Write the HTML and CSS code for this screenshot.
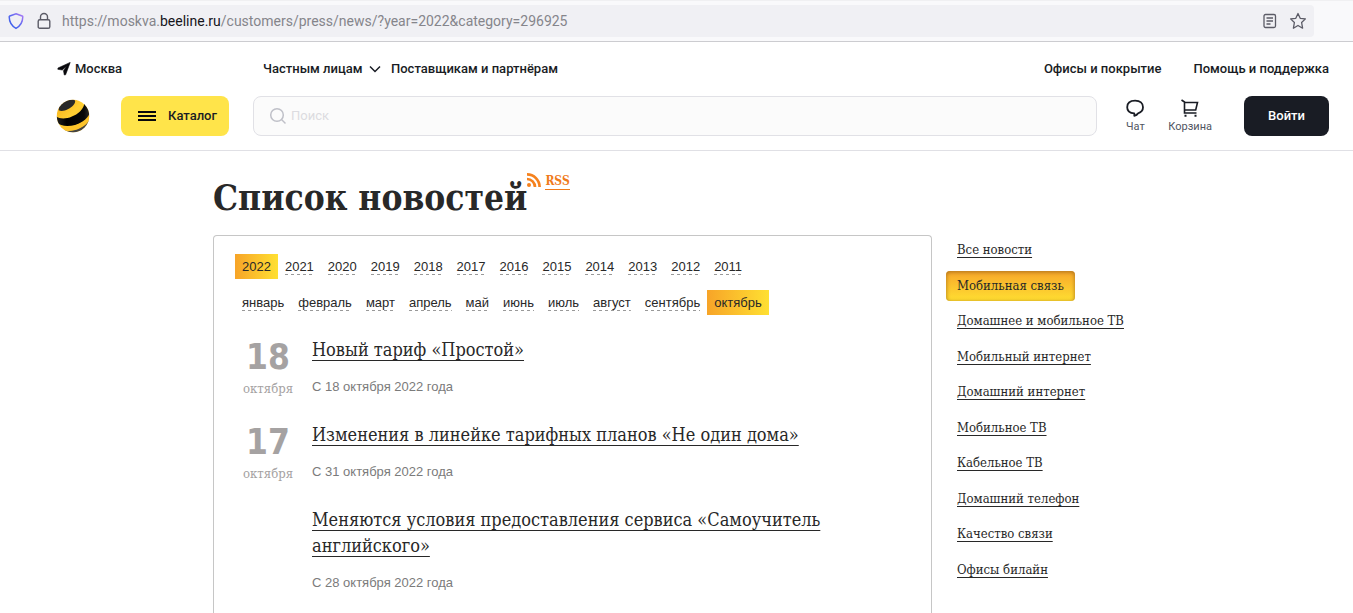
FILE: index.html
```html
<!DOCTYPE html>
<html lang="ru">
<head>
<meta charset="utf-8">
<title>Список новостей</title>
<link rel="stylesheet" href="styles.css">
</head>
<body>
<div class="toolbar">
  <div class="address">
    <svg class="shield" width="16" height="18" viewBox="0 0 16 18" fill="none"><defs><linearGradient id="sh" x1="0" y1="1" x2="1" y2="0"><stop offset="0" stop-color="#2f5be8"/><stop offset=".5" stop-color="#5a68f0"/><stop offset="1" stop-color="#b07cf5"/></linearGradient></defs><path d="M8 1.700 14.200 4c.4.200.6.400.6.800-.1 5.600-2.300 9.200-6.800 11.500C3.500 14 1.300 10.400 1.200 4.800c0-.4.200-.6.600-.8z" stroke="url(#sh)" stroke-width="1.500"/></svg>
    <svg class="lock" width="14" height="18" viewBox="0 0 14 18" fill="none" stroke="#5b5b66" stroke-width="1.400"><rect x="1.200" y="7.700" width="11.600" height="8.600" rx="1.600"/><path d="M3.500 7.500V5a3.500 3.500 0 0 1 7 0v2.500"/></svg>
    <span class="url">https://moskva.<b>beeline.ru</b>/customers/press/news/?year=2022&amp;category=296925</span>
    <button class="tool" aria-label="Режим чтения"><svg width="14" height="16" viewBox="0 0 14 16" fill="none" stroke="#5b5b66" stroke-width="1.300"><rect x="1" y="1.500" width="11.500" height="13" rx="1.500"/><path d="M3.500 5h6.500M3.500 8h6.500M3.500 11h4"/></svg></button>
    <button class="tool" aria-label="Добавить в закладки"><svg width="18" height="18" viewBox="0 0 18 18" fill="none" stroke="#5b5b66" stroke-width="1.300" stroke-linejoin="round"><path d="M9 1.500l2.200 4.800 5.200.6-3.800 3.600 1 5.700L9 13.500l-4.600 2.700 1-5.700L1.600 6.900l5.200-.6z"/></svg></button>
  </div>
</div>

<header class="header">
  <nav class="topnav">
    <a class="city" href="#"><svg width="15" height="14" viewBox="0 0 15 14"><path d="M14.200.4 2 6l-.2 1.300 4.500.7L10.500 4.200 7.500 8.800l.8 4.200 1.300-.2z" fill="#08080c" stroke="#08080c" stroke-width=".6" stroke-linejoin="round"/></svg>Москва</a>
    <a class="persons" href="#">Частным лицам<svg width="12" height="8" viewBox="0 0 12 8" fill="none" stroke="#191c24" stroke-width="1.500"><path d="M1 1.500l5 5 5-5"/></svg></a>
    <a class="partners" href="#">Поставщикам и партнёрам</a>
    <a class="offices" href="#">Офисы и покрытие</a>
    <a href="#">Помощь и поддержка</a>
  </nav>
  <div class="mainbar">
    <a class="logo" href="#" aria-label="Билайн"><svg width="34" height="34" viewBox="0 0 34 34"><defs><clipPath id="ball"><circle cx="17" cy="17" r="16.200"/></clipPath><linearGradient id="yl" x1="0" y1="0" x2="1" y2="1"><stop offset="0" stop-color="#f5a913"/><stop offset=".45" stop-color="#ffcf32"/><stop offset="1" stop-color="#f6b51d"/></linearGradient><linearGradient id="bk" x1="0" y1="0" x2="1" y2="0"><stop offset="0" stop-color="#222"/><stop offset=".3" stop-color="#000"/><stop offset=".8" stop-color="#080808"/><stop offset="1" stop-color="#333"/></linearGradient></defs><g clip-path="url(#ball)"><path d="M0 0h34v34H0z" fill="url(#yl)"/><path d="M2.800 11.300C1 5 9 0 17 .6c3 .3 2.800 3 .3 5.600-4 4-10.300 7-14.500 5.100z" fill="#292929"/><path d="M0 17.500c6 4 17 1.500 24-5 3.500-3.500 4.500-6 4-9.500L35 9c0 5-3 10-8.500 13.500C18 28 6 29 0 23z" fill="url(#bk)"/><path d="M6 31c10 2.500 22-2 28-11v15H7z" fill="#444"/><path d="M3 26.500c11 3.500 23-.5 31-10l-.5 5C27 30 15 34 6 31z" fill="#fdc42b"/></g></svg></a>
    <button class="catalog"><svg width="18" height="12" viewBox="0 0 18 12" fill="#08080c"><path d="M0 1h18v2H0zM0 5h18v2H0zM0 9h18v2H0z"/></svg>Каталог</button>
    <label class="search"><svg width="18" height="18" viewBox="0 0 18 18" fill="none" stroke="#bfc0c8" stroke-width="1.500"><circle cx="8" cy="8" r="6.300"/><path d="M12.500 12.500l4 4"/></svg><input type="search" placeholder="Поиск" aria-label="Поиск"></label>
    <div class="shortcuts">
      <a class="shortcut" href="#"><svg width="20" height="20" viewBox="0 0 20 20" fill="none" stroke="#191c24" stroke-width="1.800" stroke-linejoin="round"><path d="M9.300 15.300v2.500c1.700-.3 3-1.100 3.800-2.500 3.200-1 4.900-3.200 4.900-6 0-4.300-2.800-6.700-7.900-6.700S2.200 5 2.200 9.200c0 3.600 2.600 6 7.100 6.100z"/></svg>Чат</a>
      <a class="shortcut" href="#"><svg width="20" height="20" viewBox="0 0 20 20" fill="none" stroke="#191c24" stroke-width="1.600"><path d="M1.500 2 4.500 4v11h12M4.500 4.500H17.500l-1.800 7.500H4.500"/><path d="M4.500 17.700h2M14.500 17.700h2" stroke-width="2"/></svg>Корзина</a>
    </div>
    <button class="login">Войти</button>
  </div>
</header>

<main class="page">
  <div class="heading">
    <h1>Список новостей</h1>
    <a class="rss" href="#"><svg width="14" height="16" viewBox="0 0 14 16" fill="none" stroke="#f5821f" stroke-width="2.700"><circle cx="2" cy="13" r="2" fill="#f5821f" stroke="none"/><path d="M0 7a8 8 0 0 1 8 8M0 2.400A12.600 12.600 0 0 1 12.600 15"/></svg><span>RSS</span></a>
  </div>
  <div class="columns">
    <section class="news">
      <nav class="filter years">
        <a class="active" href="#"><span>2022</span></a><a href="#"><span>2021</span></a><a href="#"><span>2020</span></a><a href="#"><span>2019</span></a><a href="#"><span>2018</span></a><a href="#"><span>2017</span></a><a href="#"><span>2016</span></a><a href="#"><span>2015</span></a><a href="#"><span>2014</span></a><a href="#"><span>2013</span></a><a href="#"><span>2012</span></a><a href="#"><span>2011</span></a>
      </nav>
      <nav class="filter">
        <a href="#"><span>январь</span></a><a href="#"><span>февраль</span></a><a href="#"><span>март</span></a><a href="#"><span>апрель</span></a><a href="#"><span>май</span></a><a href="#"><span>июнь</span></a><a href="#"><span>июль</span></a><a href="#"><span>август</span></a><a href="#"><span>сентябрь</span></a><a class="active" href="#"><span>октябрь</span></a>
      </nav>
      <div class="items">
        <article class="item">
          <div class="date"><strong>18</strong><span>октября</span></div>
          <div class="body"><h2><a href="#">Новый тариф «Простой»</a></h2><p>С 18 октября 2022 года</p></div>
        </article>
        <article class="item">
          <div class="date"><strong>17</strong><span>октября</span></div>
          <div class="body"><h2><a href="#">Изменения в линейке тарифных планов «Не один дома»</a></h2><p>С 31 октября 2022 года</p></div>
        </article>
        <article class="item">
          <div class="date"></div>
          <div class="body"><h2><a href="#">Меняются условия предоставления сервиса «Самоучитель английского»</a></h2><p>С 28 октября 2022 года</p></div>
        </article>
      </div>
    </section>
    <nav class="categories">
      <a href="#">Все новости</a>
      <a class="current" href="#">Мобильная связь</a>
      <a href="#">Домашнее и мобильное ТВ</a>
      <a href="#">Мобильный интернет</a>
      <a href="#">Домашний интернет</a>
      <a href="#">Мобильное ТВ</a>
      <a href="#">Кабельное ТВ</a>
      <a href="#">Домашний телефон</a>
      <a href="#">Качество связи</a>
      <a href="#">Офисы билайн</a>
    </nav>
  </div>
</main>
</body>
</html>
```
FILE: styles.css
```css
* { box-sizing: border-box; }
body {
  margin: 0;
  min-height: 100vh;
  display: flex;
  flex-direction: column;
  background: #fff;
  color: #282828;
  font: 13px/20px "Liberation Sans", Arial, sans-serif;
}
a { color: inherit; text-decoration: none; }
button { border: 0; padding: 0; font: inherit; color: inherit; background: none; cursor: pointer; }
svg { display: block; flex: none; }

/* Browser toolbar */
.toolbar {
  padding: 4px 39px 4px 0;
  background: #f9f9fb;
  border-top: 1px solid #f0f0f2;
  border-bottom: 1px solid #ccccd0;
}
.address {
  display: flex;
  align-items: center;
  height: 32px;
  padding: 0 7px 0 8px;
  background: #f0f0f4;
  border-radius: 0 4px 4px 0;
}
.lock { margin: 0 11px 0 13px; }
.url {
  flex: 1;
  color: #85858b;
  font: 14px/20px Roboto, sans-serif;
  white-space: nowrap;
}
.url b { color: #15141a; font-weight: 400; }
.tool { margin-left: 12px; }

/* Site header */
.header {
  padding: 16px 24px 14px 56px;
  border-bottom: 1px solid #e0e0e5;
  color: #191c24;
  font: 500 13px/22px Roboto, sans-serif;
}
.topnav { display: flex; align-items: center; }
.city { display: flex; align-items: center; gap: 4px; width: 207px; }
.persons { display: flex; align-items: center; gap: 6px; width: 128px; }
.partners { flex: 1; }
.offices { margin-right: 32px; }
.mainbar { display: flex; align-items: center; margin-top: 16px; }
.logo { width: 65px; }
.catalog {
  display: flex;
  align-items: center;
  padding-left: 17px;
  gap: 12px;
  width: 108px;
  height: 40px;
  background: #ffe44a;
  border-radius: 8px;
}
.search {
  flex: 1;
  display: flex;
  align-items: center;
  gap: 4px;
  height: 40px;
  margin: 0 24px;
  padding: 0 15px;
  background: #fbfbfb;
  border: 1px solid #e1e1e6;
  border-radius: 8px;
}
.search input {
  flex: 1;
  min-width: 0;
  border: 0;
  padding: 0;
  outline: 0;
  background: none;
  font: 13px/20px Roboto, sans-serif;
}
.search input::placeholder { color: #dcdce0; opacity: 1; }
.shortcuts { display: flex; gap: 19px; }
.shortcut {
  display: flex;
  flex-direction: column;
  align-items: center;
  min-width: 28px;
  color: #50545f;
  font-size: 11px;
  font-weight: 400;
  line-height: 17px;
}
.login {
  width: 85px;
  height: 40px;
  margin-left: 32px;
  background: #191c24;
  border-radius: 8px;
  color: #fff;
}

/* News page */
.page {
  flex: 1;
  display: flex;
  flex-direction: column;
  width: 100%;
  max-width: 927px;
  margin: 0 auto;
  font-family: "DejaVu Serif Condensed", "DejaVu Serif", serif;
}
.heading { display: flex; align-items: flex-start; padding: 21px 0 11px; }
h1 { margin: 0; font-size: 35px; line-height: 52px; font-weight: 700; }
.rss {
  display: flex;
  gap: 4px;
  color: #f07a1a;
  font-size: 12px;
  font-weight: 700;
  line-height: 18px;
}
.rss span { height: 18px; border-bottom: 1px solid #f07a1a; }
.columns { flex: 1; display: flex; align-items: stretch; }
.news {
  flex: 1;
  max-width: 719px;
  padding: 18px 21px 0;
  border: 1px solid #c6c6c6;
  border-bottom: 0;
  border-radius: 4px 4px 0 0;
}
.filter {
  display: flex;
  flex-wrap: wrap;
  margin-bottom: 11px;
  font: 13px/15px "Liberation Sans", Arial, sans-serif;
}
.filter a { height: 25px; padding: 5px 7px; }
.filter span {
  display: block;
  padding-bottom: 1px;
  background: repeating-linear-gradient(90deg, #999 0 3px, transparent 3px 6px) bottom / 100% 1px no-repeat;
}
.filter .active { background: linear-gradient(90deg, #f7a428, #ffe032); }
.filter .active span { background: none; }
.items { margin-top: 22px; }
.item { display: flex; margin-bottom: 21px; }
.date {
  display: flex;
  flex-direction: column;
  align-items: center;
  width: 66px;
  margin-right: 11px;
  color: #a5a2a2;
}
.date strong { font: 700 35px/40px "DejaVu Sans Condensed", "DejaVu Sans", sans-serif; }
.date span { font-size: 13px; line-height: 24px; }
.body { flex: 1; }
h2 { margin: 0; font-size: 18px; line-height: 26px; font-weight: 400; max-width: 540px; }
h2 a { text-decoration: underline; text-decoration-thickness: 1px; text-underline-offset: 4px; text-decoration-skip-ink: none; }
.body p { margin: 12px 0 0; color: #7b7b7b; font: 13px/24px "Liberation Sans", Arial, sans-serif; }

.categories {
  display: flex;
  flex-direction: column;
  align-items: flex-start;
  align-self: flex-start;
  justify-content: space-between;
  height: 350px;
  margin-left: 14px;
}
.categories a {
  padding: 5px 11px;
  font-size: 13px;
  line-height: 20px;
  white-space: nowrap;
  text-decoration: underline;
  text-decoration-skip-ink: none;
  text-underline-offset: 3px;
}
.categories .current {
  background: linear-gradient(#f7a62b, #ffdf31);
  border-radius: 4px;
  box-shadow: inset 0 1px 4px #a8701a;
  text-decoration: none;
}
```
